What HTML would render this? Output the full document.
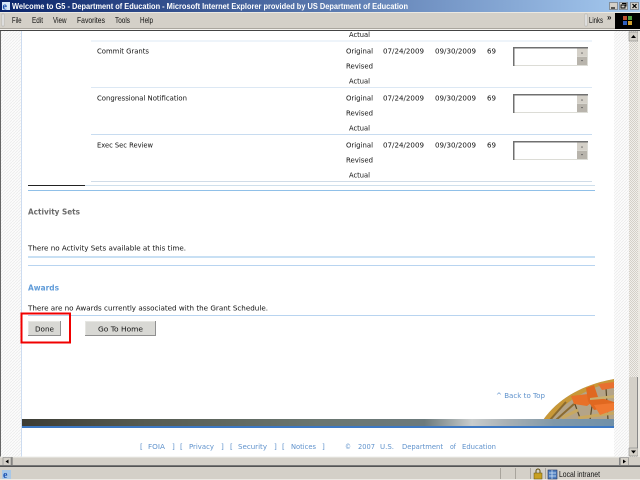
<!DOCTYPE html>
<html><head><meta charset="utf-8"><title>Welcome to G5</title>
<style>
html,body{margin:0;padding:0;width:640px;height:480px;overflow:hidden;background:#fff}
svg{display:block}
.m{font:8.5px "Liberation Sans",sans-serif;fill:#111}
.v{font:7.2px "DejaVu Sans",sans-serif;fill:#111}
.b{font:7.2px "DejaVu Sans",sans-serif;fill:#5f92cc}
</style></head><body>
<svg width="640" height="480" viewBox="0 0 640 480" xmlns="http://www.w3.org/2000/svg">
<defs>
<linearGradient id="t" x1="0" x2="1" y1="0" y2="0"><stop offset="0" stop-color="#0a246a"/><stop offset="1" stop-color="#a6caf0"/></linearGradient>
<linearGradient id="band" x1="0" x2="1" y1="0" y2="0"><stop offset="0" stop-color="#3c3c34"/><stop offset=".2" stop-color="#555a50"/><stop offset=".5" stop-color="#6a7670"/><stop offset=".68" stop-color="#6c7a7c"/><stop offset=".76" stop-color="#c8cccc"/><stop offset=".82" stop-color="#a8b0b4"/><stop offset=".9" stop-color="#8098a8"/><stop offset="1" stop-color="#7090a8"/></linearGradient>
<pattern id="h" width="3" height="3" patternUnits="userSpaceOnUse"><rect width="3" height="3" fill="#fcfcfc"/><path d="M0 3L3 0" stroke="#ececec" stroke-width=".8"/></pattern>
<pattern id="s" width="2" height="2" patternUnits="userSpaceOnUse"><rect width="2" height="2" fill="#f0eeea"/><rect width="1" height="1" fill="#d4d0c8"/><rect x="1" y="1" width="1" height="1" fill="#d4d0c8"/></pattern>
<clipPath id="w"><path d="M543 420C560 396 586 384 614 379V420Z"/></clipPath>
</defs>

<!-- title bar -->
<rect width="640" height="12" fill="url(#t)"/>
<rect x="2" y="2" width="8" height="8" fill="#d8e8f8"/><text x="2.5" y="9.5" font-family="Liberation Serif,serif" font-size="10" font-weight="bold" fill="#1a50b0">e</text>
<text x="12" y="9" font-family="Liberation Sans,sans-serif" font-size="8.500" font-weight="bold" fill="#fff" textLength="396" lengthAdjust="spacingAndGlyphs">Welcome to G5 - Department of Education - Microsoft Internet Explorer provided by US Department of Education</text>
<g fill="#d4d0c8" stroke="#555" stroke-width=".5">
<rect x="609.500" y="2.500" width="8" height="7"/><rect x="619.500" y="2.500" width="8" height="7"/><rect x="630.500" y="2.500" width="8" height="7"/></g>
<path d="M611 8h4" stroke="#000" stroke-width="1.200"/>
<path d="M621 5h4v3h-4zM622 3.500h4v3" fill="none" stroke="#000" stroke-width=".9"/>
<path d="M632.500 4l4 4m0-4l-4 4" stroke="#000" stroke-width="1.200"/>

<!-- menu bar -->
<rect y="12" width="640" height="18" fill="#d4d0c8"/>
<rect y="12" width="640" height="1" fill="#ece9e2"/>
<rect y="28" width="640" height="1" fill="#aaa69e"/>
<rect y="29" width="640" height="1" fill="#f4f2ee"/>
<rect y="30" width="640" height="1.200" fill="#444"/>
<rect x="2" y="14" width="2" height="12" fill="#eee" stroke="#999" stroke-width=".4"/>
<text class="m" x="12" y="23" textLength="9.500" lengthAdjust="spacingAndGlyphs">File</text>
<text class="m" x="32" y="23" textLength="11" lengthAdjust="spacingAndGlyphs">Edit</text>
<text class="m" x="53" y="23" textLength="13.500" lengthAdjust="spacingAndGlyphs">View</text>
<text class="m" x="77" y="23" textLength="28" lengthAdjust="spacingAndGlyphs">Favorites</text>
<text class="m" x="115" y="23" textLength="15" lengthAdjust="spacingAndGlyphs">Tools</text>
<text class="m" x="140" y="23" textLength="13" lengthAdjust="spacingAndGlyphs">Help</text>
<rect x="585" y="14" width="2" height="12" fill="#eee" stroke="#999" stroke-width=".4"/>
<text class="m" x="589" y="23" textLength="14" lengthAdjust="spacingAndGlyphs">Links</text>
<text x="607" y="20" font-family="Liberation Sans,sans-serif" font-size="8" font-weight="bold" fill="#111">»</text>
<rect x="615" y="13" width="25" height="16" fill="#000"/>
<rect x="623" y="16" width="4" height="4" fill="#c05030"/><rect x="628" y="16" width="4" height="4" fill="#50a040"/><rect x="623" y="21" width="4" height="4" fill="#3060c0"/><rect x="628" y="21" width="4" height="4" fill="#d0a030"/>

<!-- page gutters -->
<rect y="31" width="640" height="426" fill="#fff"/>
<rect y="31" width="1" height="436" fill="#666"/>
<rect x="1" y="31" width="20" height="426" fill="url(#h)"/>
<rect x="21" y="31" width="1" height="426" fill="#cddcf0"/>
<rect x="614" y="31" width="15" height="426" fill="url(#h)"/>

<!-- vertical scrollbar -->
<rect x="629" y="31" width="11" height="434" fill="url(#s)"/>
<rect x="629" y="377" width="9" height="71" fill="#d4d0c8"/>
<rect x="637" y="377" width="1" height="71" fill="#888"/>
<rect x="629" y="32" width="9" height="9" fill="#d4d0c8" stroke="#777" stroke-width=".5"/>
<path d="M631 38h5l-2.500-3z" fill="#000"/>
<rect x="629" y="448" width="9" height="8" fill="#d4d0c8" stroke="#777" stroke-width=".5"/>
<path d="M631 450.500h5l-2.500 3z" fill="#000"/>
<rect x="638" y="31" width="2" height="434" fill="#ece9e2"/>

<!-- horizontal scrollbar -->
<rect y="457" width="640" height="8" fill="#d4d0c8"/>
<rect y="456.500" width="629" height="1" fill="#eeeeea"/>
<rect x="3" y="457.500" width="8" height="8" fill="#d4d0c8" stroke="#777" stroke-width=".5"/>
<path d="M8.500 459.500v4l-3-2z" fill="#000"/>
<rect x="11.500" y="457" width="1" height="8" fill="#666"/>
<rect x="619" y="457.500" width="1" height="8" fill="#888"/>
<rect x="620.500" y="457.500" width="8" height="8" fill="#d4d0c8" stroke="#777" stroke-width=".5"/>
<path d="M623 459.500v4l3-2z" fill="#000"/>

<!-- status bar -->
<rect y="465" width="640" height="1" fill="#777"/>
<rect y="466" width="640" height="1" fill="#555"/>
<rect y="467" width="640" height="13" fill="#d4d0c8"/>
<rect y="479" width="640" height="1" fill="#eceae4"/>
<rect x="2" y="470" width="9" height="9" fill="#a8c8e8"/><text x="3" y="478" font-family="Liberation Serif,serif" font-size="10" font-weight="bold" fill="#1a50b0">e</text>
<g fill="#a8a49c"><rect x="500" y="468" width="1" height="11"/><rect x="515" y="468" width="1" height="11"/><rect x="530" y="468" width="1" height="11"/><rect x="545" y="468" width="1" height="11"/></g>
<rect x="534" y="473" width="8" height="6" fill="#c8a020" stroke="#605010" stroke-width=".5"/>
<path d="M536 473v-2a2 2 0 0 1 4 0v2" fill="none" stroke="#605010" stroke-width="1"/>
<rect x="548" y="470" width="9" height="9" fill="#5080c0" stroke="#203060" stroke-width=".6"/>
<path d="M549 473h7M549 476h7M552 470v9" stroke="#d8e8f8" stroke-width=".7"/>
<text class="m" x="559" y="477" textLength="41" lengthAdjust="spacingAndGlyphs">Local intranet</text>

<!-- table lines -->
<g fill="#dce8f4">
<rect x="91" y="40.500" width="501" height="1"/>
<rect x="91" y="87" width="501" height="1"/>
<rect x="91" y="134" width="501" height="1" fill="#c8dcf0"/>
<rect x="91" y="181" width="501" height="1" fill="#d0dce8"/>
<rect x="85" y="185" width="510" height="1" fill="#d0e0ec"/>
</g>
<rect x="28" y="185" width="57" height="1" fill="#222"/>
<rect x="28" y="190" width="567" height="1" fill="#90c0e8"/>
<rect x="28" y="256.500" width="567" height="1" fill="#90c0e8"/>
<rect x="28" y="265" width="567" height="1" fill="#b8d4f0"/>
<rect x="28" y="315" width="567" height="1" fill="#b8d4f0"/>

<!-- rows -->
<text class="v" x="349" y="37" textLength="21" lengthAdjust="spacingAndGlyphs">Actual</text>

<text class="v" x="97" y="53.500" textLength="52" lengthAdjust="spacingAndGlyphs">Commit Grants</text>
<text class="v" x="346" y="53.500" textLength="27" lengthAdjust="spacingAndGlyphs">Original</text>
<text class="v" x="383" y="53.500" textLength="41" lengthAdjust="spacingAndGlyphs">07/24/2009</text>
<text class="v" x="435" y="53.500" textLength="41" lengthAdjust="spacingAndGlyphs">09/30/2009</text>
<text class="v" x="487" y="53.500" textLength="9" lengthAdjust="spacingAndGlyphs">69</text>
<text class="v" x="346" y="68.500" textLength="27" lengthAdjust="spacingAndGlyphs">Revised</text>
<text class="v" x="349" y="83.500" textLength="21" lengthAdjust="spacingAndGlyphs">Actual</text>

<text class="v" x="97" y="100.500" textLength="90" lengthAdjust="spacingAndGlyphs">Congressional Notification</text>
<text class="v" x="346" y="100.500" textLength="27" lengthAdjust="spacingAndGlyphs">Original</text>
<text class="v" x="383" y="100.500" textLength="41" lengthAdjust="spacingAndGlyphs">07/24/2009</text>
<text class="v" x="435" y="100.500" textLength="41" lengthAdjust="spacingAndGlyphs">09/30/2009</text>
<text class="v" x="487" y="100.500" textLength="9" lengthAdjust="spacingAndGlyphs">69</text>
<text class="v" x="346" y="115.500" textLength="27" lengthAdjust="spacingAndGlyphs">Revised</text>
<text class="v" x="349" y="130.500" textLength="21" lengthAdjust="spacingAndGlyphs">Actual</text>

<text class="v" x="97" y="147.500" textLength="56" lengthAdjust="spacingAndGlyphs">Exec Sec Review</text>
<text class="v" x="346" y="147.500" textLength="27" lengthAdjust="spacingAndGlyphs">Original</text>
<text class="v" x="383" y="147.500" textLength="41" lengthAdjust="spacingAndGlyphs">07/24/2009</text>
<text class="v" x="435" y="147.500" textLength="41" lengthAdjust="spacingAndGlyphs">09/30/2009</text>
<text class="v" x="487" y="147.500" textLength="9" lengthAdjust="spacingAndGlyphs">69</text>
<text class="v" x="346" y="162.500" textLength="27" lengthAdjust="spacingAndGlyphs">Revised</text>
<text class="v" x="349" y="177.500" textLength="21" lengthAdjust="spacingAndGlyphs">Actual</text>

<!-- textareas -->
<g>
<rect x="513" y="47" width="75" height="19" fill="#dcdcd6"/><rect x="513" y="47" width="75" height="1.500" fill="#707070"/><rect x="513" y="47" width="1.500" height="19" fill="#707070"/>
<rect x="514.500" y="48.500" width="62.500" height="16.500" fill="#fff"/>
<rect x="577" y="48.500" width="10" height="8" fill="#d4d0c8"/><rect x="577" y="57" width="10" height="8" fill="#b8b4ac"/>
<path d="M581 53.500h2l-1-1.500zM581 60h2l-1 1.500z" fill="#555"/>
</g>
<g transform="translate(0,47)">
<rect x="513" y="47" width="75" height="19" fill="#dcdcd6"/><rect x="513" y="47" width="75" height="1.500" fill="#707070"/><rect x="513" y="47" width="1.500" height="19" fill="#707070"/>
<rect x="514.500" y="48.500" width="62.500" height="16.500" fill="#fff"/>
<rect x="577" y="48.500" width="10" height="8" fill="#d4d0c8"/><rect x="577" y="57" width="10" height="8" fill="#b8b4ac"/>
<path d="M581 53.500h2l-1-1.500zM581 60h2l-1 1.500z" fill="#555"/>
</g>
<g transform="translate(0,94)">
<rect x="513" y="47" width="75" height="19" fill="#dcdcd6"/><rect x="513" y="47" width="75" height="1.500" fill="#707070"/><rect x="513" y="47" width="1.500" height="19" fill="#707070"/>
<rect x="514.500" y="48.500" width="62.500" height="16.500" fill="#fff"/>
<rect x="577" y="48.500" width="10" height="8" fill="#d4d0c8"/><rect x="577" y="57" width="10" height="8" fill="#b8b4ac"/>
<path d="M581 53.500h2l-1-1.500zM581 60h2l-1 1.500z" fill="#555"/>
</g>

<!-- sections -->
<text x="28" y="214.500" font-family="DejaVu Sans,sans-serif" font-size="8" font-weight="bold" fill="#6a6a6a" textLength="52" lengthAdjust="spacingAndGlyphs">Activity Sets</text>
<text class="v" x="28" y="250.500" textLength="158" lengthAdjust="spacingAndGlyphs">There no Activity Sets available at this time.</text>
<text x="28" y="290.500" font-family="DejaVu Sans,sans-serif" font-size="8" font-weight="bold" fill="#5f9bd8" textLength="31" lengthAdjust="spacingAndGlyphs">Awards</text>
<text class="v" x="28" y="310.500" textLength="240" lengthAdjust="spacingAndGlyphs">There are no Awards currently associated with the Grant Schedule.</text>

<!-- buttons -->
<rect x="28" y="321" width="33" height="15" fill="#d8d8d4"/>
<path d="M28.500 336V321.500H60.500" fill="none" stroke="#e6e6e2" stroke-width="1"/><path d="M28 335.500H60.500V321" fill="none" stroke="#909090" stroke-width="1"/>
<text class="v" x="35" y="331.500" textLength="19" lengthAdjust="spacingAndGlyphs">Done</text>
<rect x="85" y="321" width="71" height="15" fill="#d8d8d4"/>
<path d="M85.500 336V321.500H155.500" fill="none" stroke="#e6e6e2" stroke-width="1"/><path d="M85 335.500H155.500V321" fill="none" stroke="#909090" stroke-width="1"/>
<text class="v" x="98" y="331.500" textLength="45" lengthAdjust="spacingAndGlyphs">Go To Home</text>
<rect x="21.500" y="313.500" width="48.500" height="29" fill="none" stroke="#f00000" stroke-width="2"/>

<!-- back to top & graphic -->
<text class="b" x="496" y="398" textLength="49" lengthAdjust="spacingAndGlyphs">^ Back to Top</text>
<g clip-path="url(#w)">
<rect x="543" y="378" width="71" height="44" fill="#b4a488"/>
<path d="M543 420C560 396 586 384 614 379V382C590 387 566 400 550 420Z" fill="#c89838"/>
<path d="M550 420l16-18M556 420l18-16" stroke="#8a6a30" stroke-width="2"/>
<path d="M572 396l8 22M594 392l-4 28M606 388l2 32" stroke="#584828" stroke-width="1.200"/>
<path d="M562 418l16-8M578 418l36-5" stroke="#c8a860" stroke-width="3"/>
<path d="M571 396l17-2 7 6-8 6-13-2z" fill="#e87028"/>
<path d="M586 388l8-3 4 12 16 5v5l-20 3-6-9z" fill="#e06820"/>
<path d="M594 405l20-2v7l-14 5z" fill="#f07830"/>
<path d="M598 384l16-2v6l-12 2z" fill="#e87030"/>
<path d="M590 398l24-3v3l-24 2z" fill="#c8b070"/>
</g>
<rect x="22" y="419" width="592" height="7" fill="url(#band)"/>
<rect x="22" y="426" width="592" height="2" fill="#3c78c4"/>

<!-- footer -->
<text class="b" x="140" y="449">[</text>
<text class="b" x="148" y="449" textLength="17" lengthAdjust="spacingAndGlyphs">FOIA</text>
<text class="b" x="172" y="449">]</text>
<text class="b" x="180" y="449">[</text>
<text class="b" x="189" y="449" textLength="25" lengthAdjust="spacingAndGlyphs">Privacy</text>
<text class="b" x="221" y="449">]</text>
<text class="b" x="230" y="449">[</text>
<text class="b" x="238" y="449" textLength="29" lengthAdjust="spacingAndGlyphs">Security</text>
<text class="b" x="274" y="449">]</text>
<text class="b" x="282" y="449">[</text>
<text class="b" x="291" y="449" textLength="25" lengthAdjust="spacingAndGlyphs">Notices</text>
<text class="b" x="322" y="449">]</text>
<text class="b" x="345" y="449" textLength="6" lengthAdjust="spacingAndGlyphs">©</text>
<text class="b" x="358" y="449" textLength="17" lengthAdjust="spacingAndGlyphs">2007</text>
<text class="b" x="380" y="449" textLength="14" lengthAdjust="spacingAndGlyphs">U.S.</text>
<text class="b" x="402" y="449" textLength="41" lengthAdjust="spacingAndGlyphs">Department</text>
<text class="b" x="450" y="449" textLength="6" lengthAdjust="spacingAndGlyphs">of</text>
<text class="b" x="462" y="449" textLength="34" lengthAdjust="spacingAndGlyphs">Education</text>
</svg>
</body></html>
